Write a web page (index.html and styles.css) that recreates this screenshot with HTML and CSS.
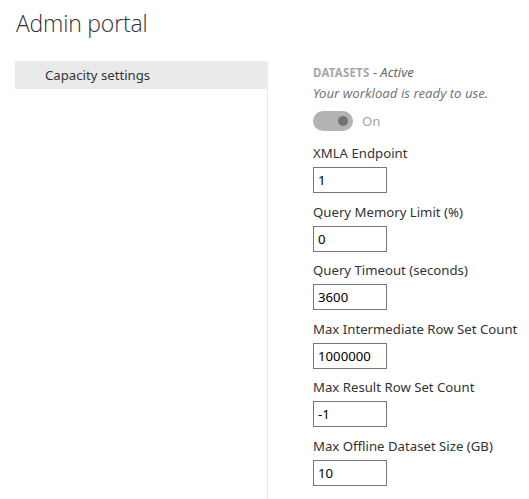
FILE: index.html
```html
<!DOCTYPE html>
<html>
<head>
<meta charset="utf-8">
<link rel="stylesheet" href="styles.css">
</head>
<body>
<h1 class="title">Admin portal</h1>
<div class="layout">
  <nav class="sidebar">
    <div class="nav-item">Capacity settings</div>
  </nav>
  <main class="content">
    <div class="workload-head"><span class="caps">DATASETS</span> <span class="status">- Active</span></div>
    <div class="workload-note">Your workload is ready to use.</div>
    <div class="toggle-row">
      <span class="toggle"><span class="knob"></span></span>
      <span class="toggle-label">On</span>
    </div>
    <div class="field">
      <label class="field-label">XMLA Endpoint</label>
      <input class="field-input" value="1">
    </div>
    <div class="field">
      <label class="field-label">Query Memory Limit (%)</label>
      <input class="field-input" value="0">
    </div>
    <div class="field">
      <label class="field-label">Query Timeout (seconds)</label>
      <input class="field-input" value="3600">
    </div>
    <div class="field">
      <label class="field-label">Max Intermediate Row Set Count</label>
      <input class="field-input" value="1000000">
    </div>
    <div class="field">
      <label class="field-label">Max Result Row Set Count</label>
      <input class="field-input" value="-1">
    </div>
    <div class="field">
      <label class="field-label">Max Offline Dataset Size (GB)</label>
      <input class="field-input" value="10">
    </div>
  </main>
</div>
</body>
</html>
```

FILE: styles.css
```css
html, body {
  margin: 0;
  padding: 0;
  background: #fff;
  font-family: "Noto Sans", "Open Sans", sans-serif;
  color: #333;
}
.title {
  margin: 0;
  padding: 7px 0 0 16px;
  font-family: "Open Sans", sans-serif;
  font-weight: 300;
  font-size: 23px;
  line-height: 32px;
  color: #333;
  letter-spacing: -0.2px;
}
.layout {
  display: flex;
  margin-top: 22px;
  padding-left: 15px;
  min-height: 440px;
}
.sidebar {
  width: 252px;
  border-right: 1px solid #e6e6e6;
}
.nav-item {
  background: #eaeaea;
  height: 28px;
  line-height: 28px;
  padding-left: 30px;
  font-size: 13.2px;
  color: #333;
  margin-right: -1px;
  position: relative;
}
.content {
  padding-left: 45px;
  padding-top: 2px;
  display: flex;
  flex-direction: column;
}
.workload-head {
  font-size: 13px;
  line-height: 18px;
}
.caps {
  font-weight: 700;
  color: #a6a6a6;
  font-size: 11.5px;
  letter-spacing: 0.2px;
}
.status {
  font-style: italic;
  color: #666;
}
.workload-note {
  font-style: italic;
  color: #777;
  font-size: 13.2px;
  line-height: 20px;
  margin-top: 1px;
}
.toggle-row {
  display: flex;
  align-items: center;
  gap: 9px;
  margin-top: 8px;
  height: 20px;
}
.toggle {
  width: 40px;
  height: 20px;
  border-radius: 10px;
  background: #b3b3b3;
  position: relative;
  display: block;
}
.knob {
  position: absolute;
  width: 10px;
  height: 10px;
  border-radius: 50%;
  background: #737373;
  right: 5px;
  top: 5px;
}
.toggle-label {
  font-size: 13.2px;
  color: #a6a6a6;
}
.field {
  display: flex;
  flex-direction: column;
  align-items: flex-start;
  margin-top: 12px;
}
.field + .field {
  margin-top: 8.6px;
}
.field-label {
  font-size: 13.2px;
  line-height: 20px;
  color: #333;
}
.field-input {
  margin-top: 4px;
  width: 64px;
  height: 24px;
  padding: 0 4px;
  border: 1px solid #767676;
  font-family: "Noto Sans", sans-serif;
  font-size: 13.2px;
  color: #000;
  box-sizing: content-box;
  outline: none;
  border-radius: 0;
}
```
